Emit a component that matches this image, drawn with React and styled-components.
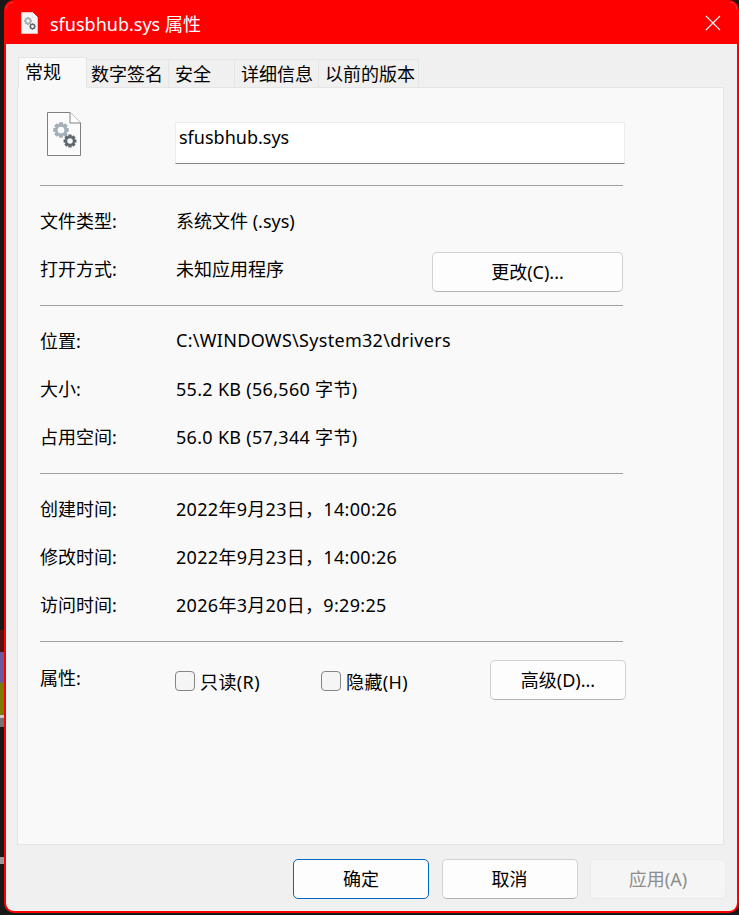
import styled, { createGlobalStyle } from "styled-components";

const GlobalStyle = createGlobalStyle`
  html, body {
    margin: 0;
    padding: 0;
    background: #191919;
  }
  * {
    box-sizing: border-box;
  }
`;

// gear outline with a round hole, teeth computed around the centre
const gearPath = (cx, cy, r, teeth = 8) => {
  const inner = r * 0.74;
  const hole = r * 0.42;
  const step = (Math.PI * 2) / teeth;
  let d = "";
  for (let i = 0; i < teeth; i++) {
    const a = i * step - step / 2;
    const pts = [
      [inner, a + step * 0.02],
      [r, a + step * 0.2],
      [r, a + step * 0.8],
      [inner, a + step * 0.98],
    ];
    pts.forEach(([rad, ang], j) => {
      const x = (cx + rad * Math.cos(ang)).toFixed(2);
      const y = (cy + rad * Math.sin(ang)).toFixed(2);
      d += `${i === 0 && j === 0 ? "M" : "L"}${x} ${y} `;
    });
  }
  d += `Z M${cx - hole} ${cy} a${hole} ${hole} 0 1 0 ${hole * 2} 0 a${hole} ${hole} 0 1 0 ${-hole * 2} 0 Z`;
  return d;
};

const SysFileIcon = ({ width, height, outline }) => (
  <svg width={width} height={height} viewBox="0 0 34 44">
    <path
      d="M0.5 0.5 H23 L33.5 11 V43.5 H0.5 Z"
      fill={outline ? "#fbfbfb" : "#f4f4f4"}
      stroke={outline}
      strokeWidth={outline ? 1 : 0}
    />
    <path d="M23 0.5 V11 H33.5" fill="#fff" stroke={outline || "#d5d5d5"} strokeWidth="1" />
    <path d={gearPath(14, 18, 8)} fill="#a5afb7" fillRule="evenodd" />
    <path d={gearPath(23, 29, 6.6)} fill="#5c666f" fillRule="evenodd" />
  </svg>
);

const Page = styled.div`
  width: 739px;
  height: 915px;
  display: flex;
  overflow: hidden;
  background: #191919;
  font-family: "Noto Sans", "Noto Sans CJK SC", sans-serif;
  font-size: 18px;
  color: #000;
`;

const DesktopStrip = styled.div`
  width: 4px;
  height: 100%;
  flex: none;
  display: flex;
  flex-direction: column;
`;

const StripPiece = styled.div`
  height: ${(p) => p.$h}px;
  background: ${(p) => p.$c};
`;

const Window = styled.div`
  width: 735px;
  height: 913px;
  display: flex;
  flex-direction: column;
  background: #f0f0f0;
  border: 2px solid #ff0000;
  border-radius: 10px;
  overflow: hidden;
`;

const TitleBar = styled.div`
  height: 42px;
  flex: none;
  display: flex;
  align-items: center;
  padding: 0 16px 0 15px;
  background: #ff0000;
  color: #fff;
`;

const TitleIcon = styled.div`
  display: flex;
  margin-right: 12px;
`;

const TitleText = styled.div`
  flex: 1;
`;

const CloseButton = styled.div`
  display: flex;
`;

const TabStrip = styled.div`
  height: 43px;
  flex: none;
  display: flex;
  align-items: flex-end;
  padding-left: 12px;
`;

const Tab = styled.div`
  width: ${(p) => p.$w}px;
  height: ${(p) => (p.$active ? 31 : 29)}px;
  margin-bottom: -1px;
  padding: 0 0 ${(p) => (p.$active ? 4 : 2)}px ${(p) => p.$pl}px;
  display: flex;
  align-items: center;
  white-space: nowrap;
  background: ${(p) => (p.$active ? "#f9f9f9" : "#f0f0f0")};
  border: 1px solid #e5e5e5;
  border-bottom: ${(p) => (p.$active ? "none" : "1px solid #e5e5e5")};
  border-left: ${(p) => (p.$active ? "1px solid #e5e5e5" : "none")};
  position: relative;
  z-index: ${(p) => (p.$active ? 1 : 0)};
`;

const Panel = styled.div`
  height: 758px;
  flex: none;
  margin: 0 13px 0 11px;
  background: #f9f9f9;
  border: 1px solid #e5e5e5;
`;

const Header = styled.div`
  height: 97px;
  display: flex;
  align-items: flex-start;
  padding: 24px 0 0 29px;
`;

const FileIconBox = styled.div`
  display: flex;
  width: 34px;
  margin-right: 94px;
`;

const FileName = styled.div`
  width: 450px;
  height: 42px;
  margin-top: 10px;
  padding: 2px 0 0 3px;
  background: #fff;
  border: 1px solid #ececec;
  border-bottom: 1px solid #868686;
`;

const Divider = styled.div`
  width: 583px;
  height: 1px;
  margin-left: 22px;
  background: #a0a0a0;
`;

const Section = styled.div`
  padding: ${(p) => p.$pad};
  margin-left: 22px;
  width: 583px;
`;

const Row = styled.div`
  height: 48px;
  display: flex;
  align-items: center;
`;

const Label = styled.div`
  width: 136px;
  flex: none;
`;

const Value = styled.div`
  flex: 1;
  white-space: nowrap;
  letter-spacing: ${(p) => (p.$spaced ? "0.3px" : "normal")};
`;

const Button = styled.div`
  width: ${(p) => p.$w || 136}px;
  height: 40px;
  flex: none;
  display: flex;
  align-items: center;
  justify-content: center;
  padding-bottom: 2px;
  white-space: nowrap;
  border-radius: 5px;
  background: ${(p) => (p.$disabled ? "#f5f5f5" : "#fdfdfd")};
  color: ${(p) => (p.$disabled ? "#8d8d8d" : "#000")};
  border: 1px solid ${(p) => (p.$primary ? "#0067c0" : p.$disabled ? "#ebebeb" : "#d1d1d1")};
  border-bottom-color: ${(p) => (p.$primary ? "#0067c0" : p.$disabled ? "#ebebeb" : "#b4b4b4")};
`;

const ChangeButton = styled(Button)`
  align-self: flex-start;
  margin-top: 8px;
`;

const AttrRow = styled.div`
  margin-left: 22px;
  padding-top: 18px;
  display: flex;
  align-items: flex-start;
`;

const AttrLabel = styled.div`
  width: 135px;
  flex: none;
  margin-top: 4px;
`;

const CheckItem = styled.div`
  width: ${(p) => p.$w}px;
  flex: none;
  display: flex;
  align-items: center;
  gap: 5px;
  margin-top: 8px;
  letter-spacing: 0.4px;
`;

const CheckBox = styled.div`
  width: 20px;
  height: 20px;
  flex: none;
  border-radius: 4px;
  background: #f5f5f5;
  border: 1px solid #858585;
`;

const Footer = styled.div`
  display: flex;
  justify-content: flex-end;
  gap: 12.5px;
  padding: 14px 11px 0 0;
`;

const rowsA = [
  ["位置:", "C:\\WINDOWS\\System32\\drivers"],
  ["大小:", "55.2 KB (56,560 字节)"],
  ["占用空间:", "56.0 KB (57,344 字节)"],
];

const rowsB = [
  ["创建时间:", "2022年9月23日，14:00:26"],
  ["修改时间:", "2022年9月23日，14:00:26"],
  ["访问时间:", "2026年3月20日，9:29:25"],
];

const strip = [
  [630, "#191919"],
  [22, "#5c0f0f"],
  [31, "#6a5a9c"],
  [32, "#7d7a00"],
  [3, "#c8c8c8"],
  [9, "#747474"],
  [130, "#191919"],
  [7, "#9a9a9a"],
  [51, "#191919"],
];

const App = () => {
  return (
    <>
      <GlobalStyle />
      <Page>
        <DesktopStrip>
          {strip.map(([h, c], i) => (
            <StripPiece key={i} $h={h} $c={c} />
          ))}
        </DesktopStrip>
        <Window>
          <TitleBar>
            <TitleIcon>
              <SysFileIcon width={17} height={22} />
            </TitleIcon>
            <TitleText>sfusbhub.sys 属性</TitleText>
            <CloseButton>
              <svg width="16" height="16" viewBox="0 0 16 16">
                <path d="M1 1 L15 15 M15 1 L1 15" stroke="#fff" strokeWidth="1.1" fill="none" />
              </svg>
            </CloseButton>
          </TitleBar>
          <TabStrip>
            <Tab $active $w={69} $pl={6}>常规</Tab>
            <Tab $w={82} $pl={4}>数字签名</Tab>
            <Tab $w={66} $pl={6}>安全</Tab>
            <Tab $w={84} $pl={6}>详细信息</Tab>
            <Tab $w={100} $pl={6}>以前的版本</Tab>
          </TabStrip>
          <Panel>
            <Header>
              <FileIconBox>
                <SysFileIcon width={34} height={44} outline="#808080" />
              </FileIconBox>
              <FileName>sfusbhub.sys</FileName>
            </Header>
            <Divider />
            <Section $pad="10px 0 13px">
              <Row>
                <Label>文件类型:</Label>
                <Value>系统文件 (.sys)</Value>
              </Row>
              <Row>
                <Label>打开方式:</Label>
                <Value>未知应用程序</Value>
                <ChangeButton $w={191}>更改(C)...</ChangeButton>
              </Row>
            </Section>
            <Divider />
            <Section $pad="10px 0 13px">
              {rowsA.map(([label, value]) => (
                <Row key={label}>
                  <Label>{label}</Label>
                  <Value $spaced>{value}</Value>
                </Row>
              ))}
            </Section>
            <Divider />
            <Section $pad="10px 0 13px">
              {rowsB.map(([label, value]) => (
                <Row key={label}>
                  <Label>{label}</Label>
                  <Value $spaced>{value}</Value>
                </Row>
              ))}
            </Section>
            <Divider />
            <AttrRow>
              <AttrLabel>属性:</AttrLabel>
              <CheckItem $w={146}>
                <CheckBox />
                只读(R)
              </CheckItem>
              <CheckItem $w={169}>
                <CheckBox />
                隐藏(H)
              </CheckItem>
              <Button>高级(D)...</Button>
            </AttrRow>
          </Panel>
          <Footer>
            <Button $primary>确定</Button>
            <Button>取消</Button>
            <Button $disabled>应用(A)</Button>
          </Footer>
        </Window>
      </Page>
    </>
  );
};

export default App;
